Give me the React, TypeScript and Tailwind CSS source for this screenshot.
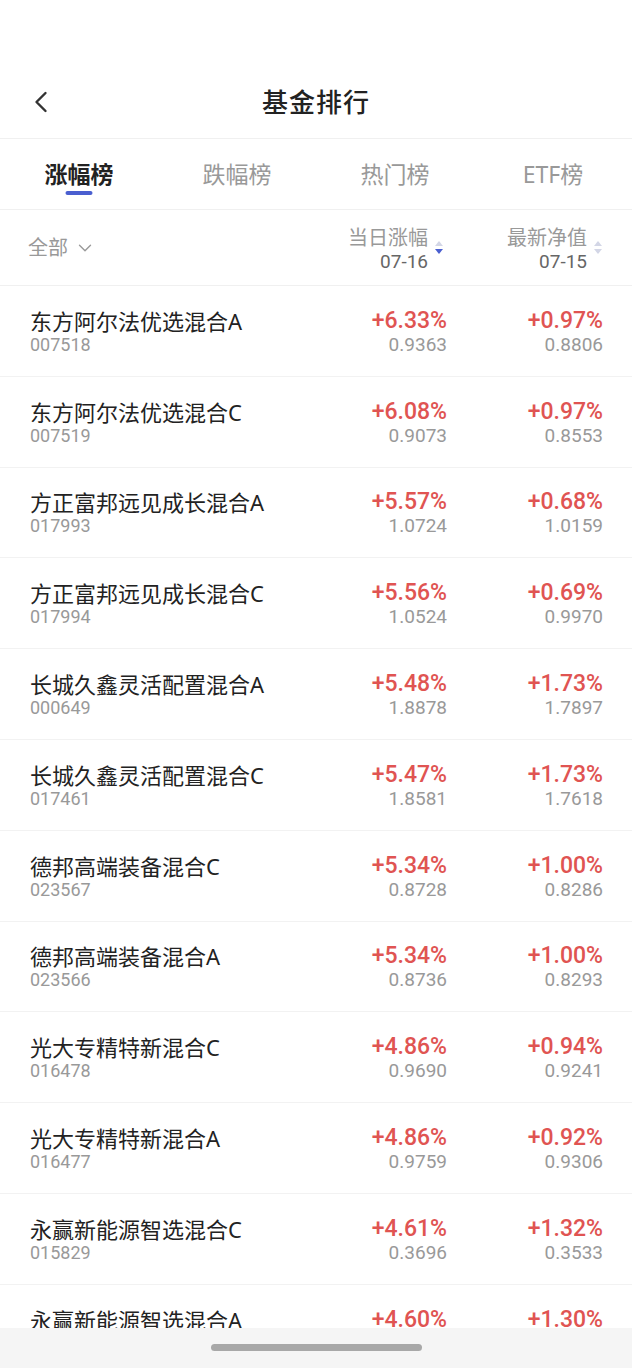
import { ChevronLeft, ChevronDown } from "lucide-react";

const funds = [
  { name: "东方阿尔法优选混合A", code: "007518", day: "+6.33%", nav1: "0.9363", chg: "+0.97%", nav2: "0.8806" },
  { name: "东方阿尔法优选混合C", code: "007519", day: "+6.08%", nav1: "0.9073", chg: "+0.97%", nav2: "0.8553" },
  { name: "方正富邦远见成长混合A", code: "017993", day: "+5.57%", nav1: "1.0724", chg: "+0.68%", nav2: "1.0159" },
  { name: "方正富邦远见成长混合C", code: "017994", day: "+5.56%", nav1: "1.0524", chg: "+0.69%", nav2: "0.9970" },
  { name: "长城久鑫灵活配置混合A", code: "000649", day: "+5.48%", nav1: "1.8878", chg: "+1.73%", nav2: "1.7897" },
  { name: "长城久鑫灵活配置混合C", code: "017461", day: "+5.47%", nav1: "1.8581", chg: "+1.73%", nav2: "1.7618" },
  { name: "德邦高端装备混合C", code: "023567", day: "+5.34%", nav1: "0.8728", chg: "+1.00%", nav2: "0.8286" },
  { name: "德邦高端装备混合A", code: "023566", day: "+5.34%", nav1: "0.8736", chg: "+1.00%", nav2: "0.8293" },
  { name: "光大专精特新混合C", code: "016478", day: "+4.86%", nav1: "0.9690", chg: "+0.94%", nav2: "0.9241" },
  { name: "光大专精特新混合A", code: "016477", day: "+4.86%", nav1: "0.9759", chg: "+0.92%", nav2: "0.9306" },
  { name: "永赢新能源智选混合C", code: "015829", day: "+4.61%", nav1: "0.3696", chg: "+1.32%", nav2: "0.3533" },
  { name: "永赢新能源智选混合A", code: "015828", day: "+4.60%", nav1: "0.3811", chg: "+1.30%", nav2: "0.3650" },
];

const tabs = ["涨幅榜", "跌幅榜", "热门榜", "ETF榜"];

function SortArrows({ active }: { active?: boolean }) {
  return (
    <svg width="10" height="20" viewBox="0 0 10 20" className="ml-[6px] mt-[12px]">
      <path d="M5 3 L9 8 L1 8 Z" fill="#d3d6e6" />
      <path d="M1 11 L9 11 L5 16 Z" fill={active ? "#4a5fd0" : "#d3d6e6"} />
    </svg>
  );
}

export default function App() {
  return (
    <div
      className="relative w-[632px] h-[1368px] overflow-hidden bg-white text-[#222]"
      style={{ fontFamily: '"Noto Sans", "Noto Sans CJK SC", sans-serif' }}
    >
      {/* Nav bar */}
      <div className="h-[64px]" />
      <div className="relative h-[75px] flex items-center justify-center border-b border-[#f0f0f0]">
        <ChevronLeft className="absolute left-[23px] top-[20px] text-[#333]" size={36} strokeWidth={1.6} />
        <span className="text-[26px] font-medium tracking-[1px] text-[#222] mt-[3px]">基金排行</span>
      </div>

      {/* Tabs */}
      <div className="grid grid-cols-4 h-[71px] border-b border-[#f0f0f0]">
        {tabs.map((t, i) => (
          <div key={t} className="relative flex items-center justify-center">
            <span className={i === 0 ? "text-[23px] font-bold text-[#222]" : "text-[23px] text-[#999]"}>{t}</span>
            {i === 0 && (
              <div className="absolute left-1/2 -translate-x-1/2 top-[52px] w-[27px] h-[4px] rounded-full bg-[#4a5fd0]" />
            )}
          </div>
        ))}
      </div>

      {/* Filter row */}
      <div className="flex items-center h-[76px] border-b border-[#f0f0f0] pl-[28px] pr-[29px]">
        <div className="flex items-center flex-1 text-[#999]">
          <span className="text-[20px]">全部</span>
          <ChevronDown className="ml-[6px] text-[#999]" size={22} strokeWidth={1.5} />
        </div>
        <div className="flex items-start w-[120px] justify-end pr-[3px] mt-[4px]">
          <div className="flex flex-col items-end leading-[24px] text-[#999]">
            <span className="text-[20px]">当日涨幅</span>
            <span className="text-[19px] text-[#666]" style={{ fontFamily: "Roboto, sans-serif" }}>07-16</span>
          </div>
          <SortArrows active />
        </div>
        <div className="flex items-start w-[156px] justify-end mt-[4px]">
          <div className="flex flex-col items-end leading-[24px] text-[#999]">
            <span className="text-[20px]">最新净值</span>
            <span className="text-[19px] text-[#666]" style={{ fontFamily: "Roboto, sans-serif" }}>07-15</span>
          </div>
          <SortArrows />
        </div>
      </div>

      {/* List */}
      <div>
        {funds.map((f) => (
          <div key={f.code} className="flex items-center h-[90.8px] border-b border-[#f2f2f2] pl-[30px] pr-[29px]">
            <div className="flex-1 flex flex-col mt-[2px]">
              <span className="text-[22px] leading-[26px] text-[#222]">{f.name}</span>
              <span className="text-[18px] leading-[22px] text-[#999]" style={{ fontFamily: "Roboto, sans-serif" }}>
                {f.code}
              </span>
            </div>
            <div className="w-[120px] flex flex-col items-end mt-[2px]">
              <span
                className="text-[23px] leading-[26px] font-medium text-[#e05452]"
                style={{ fontFamily: "Roboto, sans-serif" }}
              >
                {f.day}
              </span>
              <span className="text-[19px] leading-[22px] text-[#999]" style={{ fontFamily: "Roboto, sans-serif" }}>
                {f.nav1}
              </span>
            </div>
            <div className="w-[156px] flex flex-col items-end mt-[2px]">
              <span
                className="text-[23px] leading-[26px] font-medium text-[#e05452]"
                style={{ fontFamily: "Roboto, sans-serif" }}
              >
                {f.chg}
              </span>
              <span className="text-[19px] leading-[22px] text-[#999]" style={{ fontFamily: "Roboto, sans-serif" }}>
                {f.nav2}
              </span>
            </div>
          </div>
        ))}
      </div>

      {/* Bottom gesture bar */}
      <div className="absolute left-0 right-0 bottom-0 h-[40px] bg-[#f5f5f5] flex justify-center">
        <div className="mt-[16px] w-[211px] h-[7px] rounded-full bg-[#a8a8a8]" />
      </div>
    </div>
  );
}
